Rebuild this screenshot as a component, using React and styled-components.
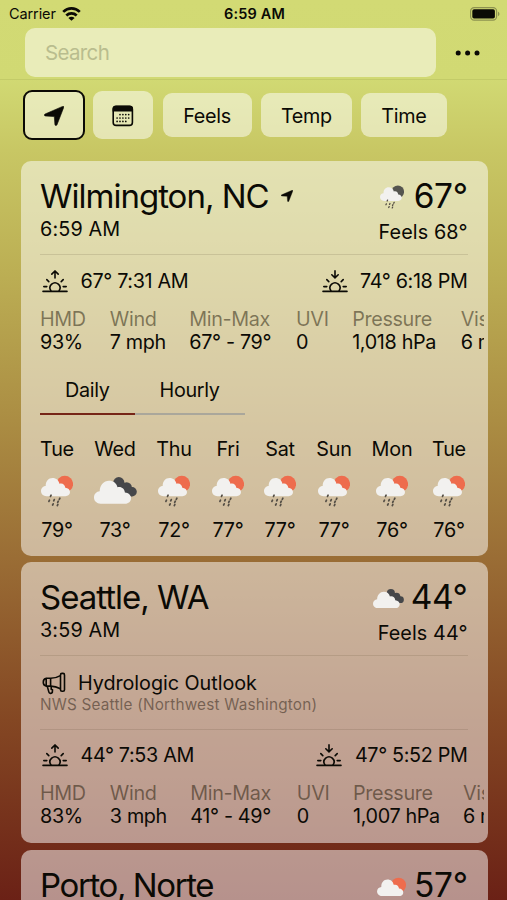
import React, { useState } from "react";
import styled, { createGlobalStyle } from "styled-components";

const GlobalStyle = createGlobalStyle`
  * {
    box-sizing: border-box;
  }

  body {
    margin: 0;
    overflow: hidden;
    font-family: Inter, "Liberation Sans", sans-serif;
    color: #0b0a05;
  }

  svg {
    display: block;
    flex: none;
  }
`;

const Screen = styled.div`
  width: 507px;
  height: 900px;
  overflow: hidden;
  background: linear-gradient(
    180deg,
    #d2da74 0,
    #d1d973 79px,
    #c8c764 150px,
    #bcaf54 270px,
    #ab8d43 420px,
    #9a6d35 558px,
    #844723 720px,
    #6b2116 900px
  );
`;

const StatusBar = styled.div`
  display: grid;
  grid-template-columns: 1fr auto 1fr;
  align-items: center;
  height: 28px;
  padding: 0 7px 1px 9px;
  font-size: 14.5px;
  line-height: 18px;
`;

const Carrier = styled.div`
  display: flex;
  align-items: center;
  gap: 6px;
  letter-spacing: -0.1px;
`;

const Clock = styled.div`
  font-weight: 600;
  letter-spacing: 0.15px;
`;

const Battery = styled.div`
  display: flex;
  justify-content: flex-end;
`;

const Header = styled.header`
  display: flex;
  align-items: flex-start;
  height: 52px;
  padding-left: 25px;
  border-bottom: 1px solid #c3cb68;
`;

const SearchInput = styled.input`
  width: 411px;
  height: 49px;
  padding: 0 20px;
  border: none;
  border-radius: 10px;
  outline: none;
  background: #e9ecb9;
  font-family: inherit;
  font-size: 20.5px;
  letter-spacing: -0.65px;

  &::placeholder {
    color: #b9bd8e;
    opacity: 1;
  }
`;

const MenuButton = styled.button`
  height: 49px;
  margin-left: 19px;
  padding: 0;
  border: none;
  background: none;
`;

const Toolbar = styled.div`
  display: flex;
  align-items: center;
  gap: 9.3px;
  height: 70px;
  padding-left: 23px;
`;

const ToolButton = styled.button`
  display: flex;
  align-items: center;
  justify-content: center;
  width: ${(props) => props.$width}px;
  height: ${(props) => props.$height || 44.5}px;
  margin-right: ${(props) => (props.$active ? -1 : 0)}px;
  padding: 1px 0 0;
  border: ${(props) => (props.$active ? "2.5px solid #0b0a05" : "none")};
  border-radius: 9px;
  background: rgba(255, 255, 255, 0.5);
  color: #0b0a05;
  font-family: inherit;
  font-size: 19.8px;
  letter-spacing: -0.3px;
`;

const CardList = styled.main`
  display: flex;
  flex-direction: column;
  gap: 6.5px;
  padding: 11px 19.5px 0 20.5px;
`;

const Card = styled.section`
  flex: none;
  height: ${(props) => props.$height}px;
  padding: 15px 4px 0 19.5px;
  border-radius: 10px;
  background: rgba(255, 255, 255, 0.51);
  font-size: 19.8px;
  line-height: 24px;
  letter-spacing: -0.35px;
  white-space: nowrap;
`;

const CardHead = styled.div`
  display: flex;
  justify-content: space-between;
  height: 78px;
  margin-right: 16px;
`;

const Place = styled.h2`
  display: flex;
  align-items: center;
  gap: 12px;
  margin: 0 0 1px;
  font-size: 33px;
  font-weight: 400;
  line-height: 40px;
  letter-spacing: ${(props) => props.$track || -1}px;
`;

const LocalTime = styled.div`
  letter-spacing: 0.15px;
`;

const Conditions = styled.div`
  display: flex;
  flex-direction: column;
  align-items: flex-end;
`;

const Current = styled.div`
  display: flex;
  align-items: center;
  gap: ${(props) => props.$gap}px;
  margin-bottom: 4px;
  font-size: 33.5px;
  line-height: 40px;
  letter-spacing: -0.4px;

  svg {
    margin-top: ${(props) => props.$drop || 0}px;
  }
`;

const FeelsLike = styled.div`
  letter-spacing: 0.1px;
`;

const Divider = styled.hr`
  height: 1px;
  margin: 0 16px 0 0;
  border: none;
  background: rgba(80, 70, 40, 0.15);
`;

const AlertBlock = styled.div`
  height: 73px;
  padding-top: 15px;
`;

const AlertTitle = styled.div`
  display: flex;
  align-items: center;
  gap: 12px;
  padding-left: 2px;
  letter-spacing: -0.05px;
`;

const AlertSource = styled.div`
  font-size: 15.3px;
  line-height: 20px;
  letter-spacing: 0.2px;
  color: rgba(40, 25, 15, 0.5);
`;

const SunRow = styled.div`
  display: flex;
  justify-content: space-between;
  margin: ${(props) => props.$top}px 16px 13.5px 2px;
`;

const SunEvent = styled.div`
  display: flex;
  align-items: center;
  gap: 12.5px;
`;

const Stats = styled.div`
  display: flex;
  overflow: hidden;
`;

const Stat = styled.div`
  flex: none;
  width: ${(props) => props.$width}px;
`;

const StatLabel = styled.div`
  height: 23.5px;
  color: rgba(30, 22, 5, 0.5);
`;

const Tabs = styled.div`
  display: flex;
  margin: 24px 0 21.5px;
`;

const Tab = styled.button`
  width: ${(props) => props.$width}px;
  height: 37px;
  padding: 0 0 10.5px;
  border: none;
  border-bottom: 2.5px solid ${(props) => (props.$active ? "#762517" : "#aaa79b")};
  background: none;
  color: inherit;
  font: inherit;
  letter-spacing: inherit;
`;

const Forecast = styled.div`
  display: flex;
  gap: 20px;
`;

const Day = styled.div`
  display: flex;
  flex-direction: column;
  align-items: center;
  width: ${(props) => props.$width}px;
  letter-spacing: -0.2px;
`;

const DayIcon = styled.div`
  display: flex;
  align-items: center;
  justify-content: center;
  height: 57px;
  padding-top: 3px;
`;

const LocationArrow = ({ size }) => (
  <svg width={size} height={size} viewBox="0 0 20 20" fill="#0b0a05" stroke="#0b0a05" strokeWidth="0.6">
    <path d="M19.3.3a.7.7 0 0 1 .5.9L13 18.8c-.5 1.2-2 .9-2.1-.3L10.3 10.6 1.5 10c-1.3-.1-1.6-1.5-.4-2L18.6.4a1 1 0 0 1 .7-.1Z" />
  </svg>
);

const WifiIcon = () => (
  <svg width="19" height="14" viewBox="0 0 19 14" fill="none" stroke="#0b0a05" strokeWidth="2.7">
    <path d="M1.2 4.9c4.8-4.6 11.8-4.6 16.6 0" />
    <path d="M4.3 8.5c3-2.8 7.4-2.8 10.4 0" />
    <path d="M9.5 13.8 6.4 10.9c1.8-1.6 4.4-1.6 6.2 0Z" fill="#0b0a05" stroke="none" />
  </svg>
);

const BatteryIcon = () => (
  <svg width="30" height="14" viewBox="0 0 30 14">
    <rect x="0.6" y="0.6" width="26" height="12.6" rx="3.6" fill="none" stroke="#8d9250" strokeWidth="1.2" />
    <rect x="2.3" y="2.3" width="22.6" height="9.2" rx="1.8" fill="#0b0a05" />
    <path d="M28 4.7c1.9.7 1.9 3.7 0 4.4Z" fill="#8d9250" />
  </svg>
);

const MoreIcon = () => (
  <svg width="26" height="6" viewBox="0 0 26 6" fill="#0b0a05">
    <circle cx="3.2" cy="3" r="2.5" />
    <circle cx="12.6" cy="3" r="2.5" />
    <circle cx="22" cy="3" r="2.5" />
  </svg>
);

const CalendarIcon = () => (
  <svg width="22" height="22" viewBox="0 0 22 22" fill="#0b0a05">
    <rect x="1.2" y="1.4" width="19.2" height="19" rx="3" fill="none" stroke="#0b0a05" strokeWidth="1.6" />
    <path d="M.6 6.6V4A3.2 3.2 0 0 1 3.8.7h14A3.2 3.2 0 0 1 21 4v2.6Z" />
    {[8, 10.9, 13.8, 16.7].map((x) => (
      <circle key={x} cx={x} cy="9.6" r="0.85" />
    ))}
    {[5.1, 8, 10.9, 13.8, 16.7].map((x) => (
      <circle key={x} cx={x} cy="13" r="0.85" />
    ))}
    {[5.1, 8, 10.9, 13.8].map((x) => (
      <circle key={x} cx={x} cy="16.4" r="0.85" />
    ))}
  </svg>
);

const SunEventIcon = ({ set }) => (
  <svg width="26" height="23" viewBox="0 0 26 23" fill="none" stroke="#0b0a05" strokeWidth="1.6" strokeLinecap="round">
    <path d="M1 21.4h24M1.8 16.6h3M21.2 16.6h3M4.8 9.6l2 2M21.2 9.6l-2 2" />
    <path d="M8.9 20.8a5 5 0 1 1 8.2 0" />
    <path d={set ? "M13 .9v6.8M9.8 4.8 13 7.9l3.2-3.1" : "M13 7.9V1.1M9.8 4.1 13 1l3.2 3.1"} />
  </svg>
);

const MegaphoneIcon = () => (
  <svg width="24" height="23" viewBox="0 0 24 23" fill="none" stroke="#0b0a05" strokeWidth="1.6" strokeLinejoin="round">
    <rect x="18.5" y="1.4" width="4" height="17.8" rx="1.5" />
    <path d="M18.5 3.6C14.5 5.8 12.3 6.3 8.7 6.3H4.2v7.8h4.5c3.6 0 5.8.5 9.8 2.6" />
    <path d="M4.2 6.6C.3 6.8.3 13.6 4.2 13.9M8.6 6.3v7.8M5.2 14.1l1.7 6c.3 1.5 2.8 1.7 3.4.3l.2-2.7-1.3-.5v-3" />
  </svg>
);

const CLOUD =
  "M5.6 21.2C2.3 21.2 0 19 0 16.1c0-3 2.2-5 4.7-5.1C4.5 6.2 7.5 2.9 11.5 2.9c3.8 0 6.3 2.4 6.9 5.8 3.1-.9 5.5.8 5.9 4.1 2.7.1 4.7 1.9 4.7 4.3 0 2.5-1.9 4.1-4.5 4.1Z";

const DROPS = [
  [9.8, 20.8],
  [13, 25.2],
  [8.2, 25.8],
  [18.6, 23.8],
  [17, 26.8],
  [11.9, 29.4],
  [16.6, 30],
];

const PartlyCloudyIcon = ({ size, sun = "#ee6c4d", rain }) => (
  <svg width={size} height={rain ? size : size * 0.67} viewBox={rain ? "0 0 32 32" : "0 0 32 21.5"}>
    <circle cx="23.8" cy="9" r="8.3" fill={sun} />
    <path d={CLOUD} fill="#f2f1ef" />
    {rain &&
      DROPS.map(([x, y]) => (
        <path key={`${x}-${y}`} d={`M${x + 0.3} ${y - 0.6}l-.6 1.2`} stroke="#544e45" strokeWidth="1.7" strokeLinecap="round" />
      ))}
  </svg>
);

const CloudyIcon = ({ size }) => (
  <svg width={size} height={(size * 27) / 43} viewBox="0 0 43 27">
    <g fill="#46474a">
      <circle cx="24.8" cy="5.6" r="5.6" />
      <circle cx="32.6" cy="10.5" r="5.3" />
      <circle cx="38.1" cy="14.8" r="4.7" />
      <path d="M21 8l9 9 8 2.4 1-8L27 4Z" />
    </g>
    <path
      d="M6.6 26.7C2.7 26.7 0 24 0 20.6c0-3.6 2.5-6 5.7-6.3C5.8 8.3 9.8 3.8 15 3.8c4.6 0 7.5 2.5 8.5 6.5 3.9-1 7 1.4 7.4 5.3 3.5.2 6.1 2.5 6.1 5.6 0 3.2-2.5 5.5-5.8 5.5Z"
      fill="#f2f1ef"
    />
  </svg>
);

const homeStats = [
  { label: "HMD", value: "93%", width: 69.8 },
  { label: "Wind", value: "7 mph", width: 79.5 },
  { label: "Min-Max", value: "67° - 79°", width: 106.7 },
  { label: "UVI", value: "0", width: 56.2 },
  { label: "Pressure", value: "1,018 hPa", width: 108.5 },
  { label: "Vis", value: "6 mi", width: 90 },
];

const seattleStats = [
  { label: "HMD", value: "83%", width: 69.8 },
  { label: "Wind", value: "3 mph", width: 80.5 },
  { label: "Min-Max", value: "41° - 49°", width: 106.5 },
  { label: "UVI", value: "0", width: 56.2 },
  { label: "Pressure", value: "1,007 hPa", width: 110 },
  { label: "Vis", value: "6 mi", width: 90 },
];

const days = [
  { name: "Tue", temp: "79°", width: 34 },
  { name: "Wed", temp: "73°", width: 42, cloudy: true },
  { name: "Thu", temp: "72°", width: 36 },
  { name: "Fri", temp: "77°", width: 32 },
  { name: "Sat", temp: "77°", width: 32 },
  { name: "Sun", temp: "77°", width: 36 },
  { name: "Mon", temp: "76°", width: 40 },
  { name: "Tue", temp: "76°", width: 34 },
];

const SunTimes = ({ rise, set, top }) => (
  <SunRow $top={top}>
    <SunEvent>
      <SunEventIcon />
      {rise}
    </SunEvent>
    <SunEvent>
      <SunEventIcon set />
      {set}
    </SunEvent>
  </SunRow>
);

const StatList = ({ items }) => (
  <Stats>
    {items.map((item) => (
      <Stat key={item.label} $width={item.width}>
        <StatLabel>{item.label}</StatLabel>
        <div>{item.value}</div>
      </Stat>
    ))}
  </Stats>
);

const App = () => {
  const [query, setQuery] = useState("");
  const [tab, setTab] = useState("daily");

  return (
    <>
      <GlobalStyle />
      <Screen>
        <StatusBar>
          <Carrier>
            Carrier
            <WifiIcon />
          </Carrier>
          <Clock>6:59 AM</Clock>
          <Battery>
            <BatteryIcon />
          </Battery>
        </StatusBar>

        <Header>
          <SearchInput placeholder="Search" value={query} onChange={(e) => setQuery(e.target.value)} />
          <MenuButton aria-label="Menu">
            <MoreIcon />
          </MenuButton>
        </Header>

        <Toolbar>
          <ToolButton $width={62} $height={50} $active aria-label="Current location">
            <LocationArrow size={20} />
          </ToolButton>
          <ToolButton $width={60} $height={48} aria-label="Calendar">
            <CalendarIcon />
          </ToolButton>
          <ToolButton $width={89}>Feels</ToolButton>
          <ToolButton $width={91}>Temp</ToolButton>
          <ToolButton $width={85.5}>Time</ToolButton>
        </Toolbar>

        <CardList>
          <Card $height={394.5}>
            <CardHead>
              <div>
                <Place>
                  Wilmington, NC
                  <LocationArrow size={12} />
                </Place>
                <LocalTime>6:59 AM</LocalTime>
              </div>
              <Conditions>
                <Current $gap={10} $drop={2}>
                  <PartlyCloudyIcon size={24} sun="#55554f" rain />
                  67°
                </Current>
                <FeelsLike>Feels 68°</FeelsLike>
              </Conditions>
            </CardHead>
            <Divider />
            <SunTimes rise="67° 7:31 AM" set="74° 6:18 PM" top={14} />
            <StatList items={homeStats} />
            <Tabs>
              <Tab $width={94.5} $active={tab === "daily"} onClick={() => setTab("daily")}>
                Daily
              </Tab>
              <Tab $width={110} $active={tab === "hourly"} onClick={() => setTab("hourly")}>
                Hourly
              </Tab>
            </Tabs>
            <Forecast>
              {days.map((day, i) => (
                <Day key={i} $width={day.width}>
                  {day.name}
                  <DayIcon>{day.cloudy ? <CloudyIcon size={43} /> : <PartlyCloudyIcon size={32} rain />}</DayIcon>
                  {day.temp}
                </Day>
              ))}
            </Forecast>
          </Card>

          <Card $height={281}>
            <CardHead>
              <div>
                <Place>Seattle, WA</Place>
                <LocalTime>3:59 AM</LocalTime>
              </div>
              <Conditions>
                <Current $gap={7} $drop={3}>
                  <CloudyIcon size={31} />
                  44°
                </Current>
                <FeelsLike>Feels 44°</FeelsLike>
              </Conditions>
            </CardHead>
            <Divider />
            <AlertBlock>
              <AlertTitle>
                <MegaphoneIcon />
                Hydrologic Outlook
              </AlertTitle>
              <AlertSource>NWS Seattle (Northwest Washington)</AlertSource>
            </AlertBlock>
            <Divider />
            <SunTimes rise="44° 7:53 AM" set="47° 5:52 PM" top={13} />
            <StatList items={seattleStats} />
          </Card>

          <Card $height={281}>
            <CardHead>
              <div>
                <Place $track={-1.4}>Porto, Norte</Place>
              </div>
              <Conditions>
                <Current $gap={8} $drop={4}>
                  <PartlyCloudyIcon size={29} />
                  57°
                </Current>
              </Conditions>
            </CardHead>
          </Card>
        </CardList>
      </Screen>
    </>
  );
};

export default App;
